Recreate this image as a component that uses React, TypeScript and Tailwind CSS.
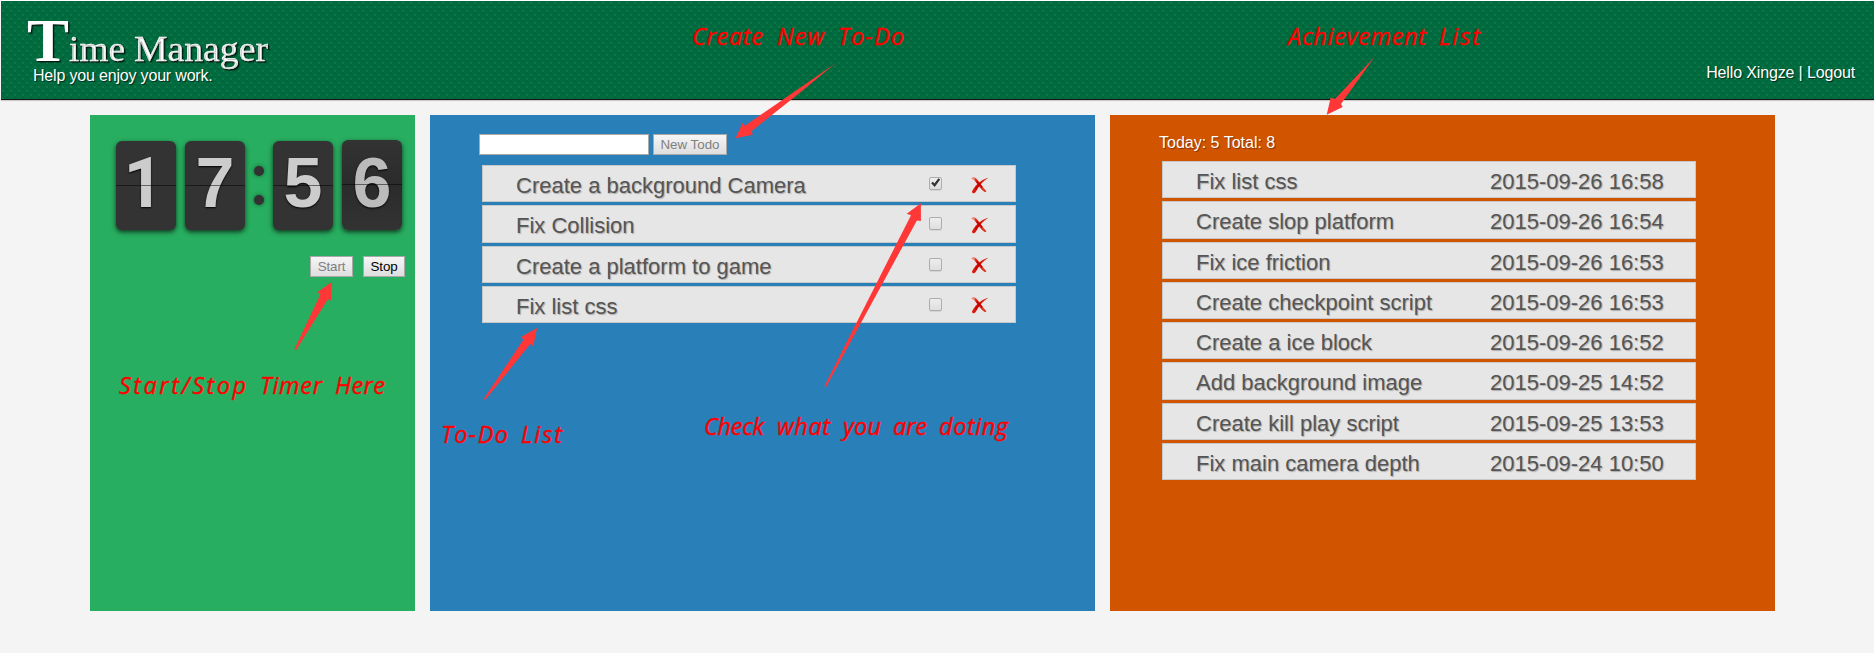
import React from "react";

const todos = [
  { name: "Create a background Camera", checked: true },
  { name: "Fix Collision", checked: false },
  { name: "Create a platform to game", checked: false },
  { name: "Fix list css", checked: false },
];

const achievements = [
  ["Fix list css", "2015-09-26 16:58"],
  ["Create slop platform", "2015-09-26 16:54"],
  ["Fix ice friction", "2015-09-26 16:53"],
  ["Create checkpoint script", "2015-09-26 16:53"],
  ["Create a ice block", "2015-09-26 16:52"],
  ["Add background image", "2015-09-25 14:52"],
  ["Create kill play script", "2015-09-25 13:53"],
  ["Fix main camera depth", "2015-09-24 10:50"],
];

// Each note is a list of [word, x, width] on a common baseline.
const notes: { y: number; words: [string, number, number][] }[] = [
  { y: 45, words: [["Create", 692, 71], ["New", 777, 47], ["To-Do", 838, 66]] },
  { y: 45, words: [["Achievement", 1288, 138], ["List", 1439, 41]] },
  { y: 394, words: [["Start/Stop", 119, 127], ["Timer", 260, 62], ["Here", 335, 50]] },
  { y: 443, words: [["To-Do", 441, 67], ["List", 521, 41]] },
  { y: 435, words: [["Check", 704, 60], ["what", 777, 53], ["you", 843, 38], ["are", 893, 34], ["doting", 939, 69]] },
];

const arrows = [
  "M836 63L745 125.700L742.500 123L735.500 138.200L752.700 134.700L751.700 131L794 97.500Z",
  "M1374.500 57L1335 99L1330.700 97.500L1326.700 114.700L1342.700 107L1341 104Z",
  "M294.300 349.500L320.500 294.300L317 292.500L331.700 282L331 300.700L328 299L296 350.300Z",
  "M483.800 399L523.500 339.500L521 337L537 328L533.300 346.300L530.300 344L485.300 399.700Z",
  "M824.500 386L911 215.200L906.700 213.700L920.900 203.300L920.900 221L916.900 220.500L826 387Z",
];

function Digit({ value, active = false }: { value: string; active?: boolean }) {
  return (
    <div
      className={`relative flex w-[60px] items-center justify-center rounded-[6px] pb-[5px] text-[70px] font-bold leading-none shadow-[0_2px_5px_rgba(0,0,0,0.7)] [text-shadow:0_1px_2px_#000] ${
        active ? "-mt-px h-[90px] bg-linear-to-b from-[#333] via-[#2b2b2b] to-[#333] text-[#bbb]" : "h-[89px] bg-[#333] text-[#ccc]"
      } ${value === "1" ? "pr-[5px] font-['Roboto',sans-serif]" : ""}`}
    >
      {value}
      <i className="absolute inset-x-0 top-[44px] h-px bg-black/50" />
    </div>
  );
}

function Button({ children, className, disabled = false }: { children: React.ReactNode; className: string; disabled?: boolean }) {
  return (
    <button
      disabled={disabled}
      className={`flex h-[21px] items-center justify-center whitespace-nowrap border border-[#a9a9a9] bg-linear-to-b from-[#f6f6f6] to-[#dedede] text-[13.333px] leading-[18px] ${className} ${
        disabled ? "text-[#808080]" : "text-black"
      }`}
    >
      {children}
    </button>
  );
}

function CheckBox({ checked }: { checked: boolean }) {
  return (
    <span className="relative h-[13px] w-[13px] rounded-[2px] border border-[#adadad] bg-linear-to-b from-[#eee] to-[#dedede] shadow-[0_1px_0_rgba(0,0,0,0.08)]">
      {checked && (
        <svg className="absolute -top-px left-0" width="12" height="11" viewBox="0 0 12 11">
          <path d="M2 5.500L4.600 8.200L9.300 1.900" fill="none" stroke="#333" strokeWidth="2.300" />
        </svg>
      )}
    </span>
  );
}

function DeleteIcon() {
  return (
    <svg width="18" height="17" viewBox="0 0 18 17">
      <path d="M0.300 1.300C2.500 0 4.500 0.500 6 2.200C8.800 5.500 11.500 10.500 15.500 14.300L14 15.300C10 12.800 6.500 7.500 3.800 3.800C2.800 2.500 1.500 2.200 0.300 1.300Z" fill="#e0301c" />
      <path d="M17.500 0.700C12.500 3.500 8 8.500 4.700 15C3.200 17 1 16.500 1 14.500C3.500 9 9 3 17.500 0.700Z" fill="#d81a0a" />
      <path d="M6 4.500L10.800 10M9 6.500L5 11.500" stroke="#c80000" strokeWidth="1.600" strokeLinecap="round" />
      <path d="M0.300 1.300C1.800 0.400 3.200 0.400 4.300 1L3.500 3.400Z" fill="#f0a898" fillOpacity="0.700" />
    </svg>
  );
}

const row =
  "flex h-[37.250px] w-[534px] items-center border border-[#c8c8c8] bg-[#e6e6e6] pl-[33px] pt-[4px] text-[22px] text-[#555] [text-shadow:1px_1px_1px_rgba(0,0,0,0.25)]";

export default function App() {
  return (
    <div className="relative h-[653px] w-[1874px] overflow-hidden bg-[#f4f4f4] font-['Liberation_Sans',sans-serif] text-[16px]">
      <div className="border-l border-t border-white">
        <header className="flex h-[99px] justify-between border-b border-[#151515] bg-[#006b3e] text-white shadow-[0_1px_1px_#ccc] [background-image:radial-gradient(circle_at_2px_2px,#22805580_0.900px,transparent_1.500px),radial-gradient(circle_at_6px_6px,#22805580_0.900px,transparent_1.500px),radial-gradient(circle_at_2px_4px,#00502c80_0.600px,transparent_1.200px),radial-gradient(circle_at_6px_0px,#00502c80_0.600px,transparent_1.200px)] [background-size:8px_8px] [text-shadow:1px_1px_1px_rgba(0,0,0,0.6)]">
          <div className="pl-[26px] pt-[4px]">
            <h1 className="h-[61px]">
              <svg width="243" height="68" className="block overflow-visible drop-shadow-[1px_1px_0.500px_rgba(0,0,0,0.45)]" aria-label="Time Manager">
                <g fill="#fff" fontFamily="Liberation Serif, serif">
                  <text x="0" y="56" fontSize="61" fontWeight="bold" textLength="42" lengthAdjust="spacingAndGlyphs">T</text>
                  <g stroke="#fff" strokeWidth="0.350" fontSize="36">
                    <text x="42" y="56" textLength="56" lengthAdjust="spacingAndGlyphs">ime</text>
                    <text x="107" y="56" textLength="134" lengthAdjust="spacingAndGlyphs">Manager</text>
                  </g>
                </g>
              </svg>
            </h1>
            <p className="pl-[6px] text-[16px] leading-[20px] tracking-[-0.180px]">Help you enjoy your work.</p>
          </div>
          <p className="pr-[19px] pt-[62px] leading-[20px] tracking-[-0.140px]">Hello Xingze | Logout</p>
        </header>
      </div>

      <main className="flex gap-[15px] pl-[90px] pt-[15px]">
        <section className="h-[495.500px] w-[325px] bg-[#28ae60]">
          <div className="flex pl-[26px] pt-[26px]">
            <Digit value="1" />
            <div className="w-[9px]" />
            <Digit value="7" />
            <div className="flex w-[28px] flex-col items-center gap-[19px] pt-[25px]">
              <i className="h-[10px] w-[10px] rounded-full bg-[#323232] shadow-[0_0_4px_rgba(0,0,0,0.5)]" />
              <i className="h-[10px] w-[10px] rounded-full bg-[#323232] shadow-[0_0_4px_rgba(0,0,0,0.5)]" />
            </div>
            <Digit value="5" />
            <div className="w-[9px]" />
            <Digit value="6" active />
          </div>
          <div className="flex justify-end gap-[10px] pr-[10px] pt-[26px]">
            <Button className="w-[43px] tracking-[-0.100px]" disabled>Start</Button>
            <Button className="w-[42px] tracking-[-0.100px]">Stop</Button>
          </div>
        </section>

        <section className="h-[495.500px] w-[665px] bg-[#297fb8] pl-[49px] pt-[19px]">
          <div className="flex gap-[4px]">
            <input readOnly className="h-[21px] w-[170px] border border-[#aaa] bg-white" />
            <Button className="w-[74px]" disabled>New Todo</Button>
          </div>
          <ul className="flex flex-col gap-[3px] pl-[3px] pt-[10px]">
            {todos.map((todo) => (
              <li key={todo.name} className={row}>
                <span className="w-[413px]">{todo.name}</span>
                <span className="-mt-[4px] flex w-[42px]"><CheckBox checked={todo.checked} /></span>
                <span className="-mt-[1px]"><DeleteIcon /></span>
              </li>
            ))}
          </ul>
        </section>

        <section className="h-[495.500px] w-[665px] bg-[#d15400] pl-[49px] pt-[18px]">
          <p className="leading-[20px] text-white [text-shadow:1px_1px_1px_rgba(0,0,0,0.4)]">Today: 5 Total: 8</p>
          <ul className="flex flex-col gap-[3px] pl-[3px] pt-[8px]">
            {achievements.map(([name, date]) => (
              <li key={name} className={row}>
                <span className="w-[294px]">{name}</span>
                <span>{date}</span>
              </li>
            ))}
          </ul>
        </section>
      </main>

      <svg className="pointer-events-none absolute left-0 top-0" width="1874" height="653" viewBox="0 0 1874 653">
        {arrows.map((d) => (
          <path key={d} d={d} fill="#ff3737" />
        ))}
        <g fill="#f00" stroke="#f00" strokeWidth="0.400" fontFamily="Open Sans, Noto Sans, sans-serif" fontStyle="italic" fontSize="23.500">
          {notes.flatMap(({ y, words }) =>
            words.map(([word, x, width]) => (
              <text key={`${word}-${x}`} x={x} y={y} textLength={width}>
                {word}
              </text>
            )),
          )}
        </g>
      </svg>
    </div>
  );
}
